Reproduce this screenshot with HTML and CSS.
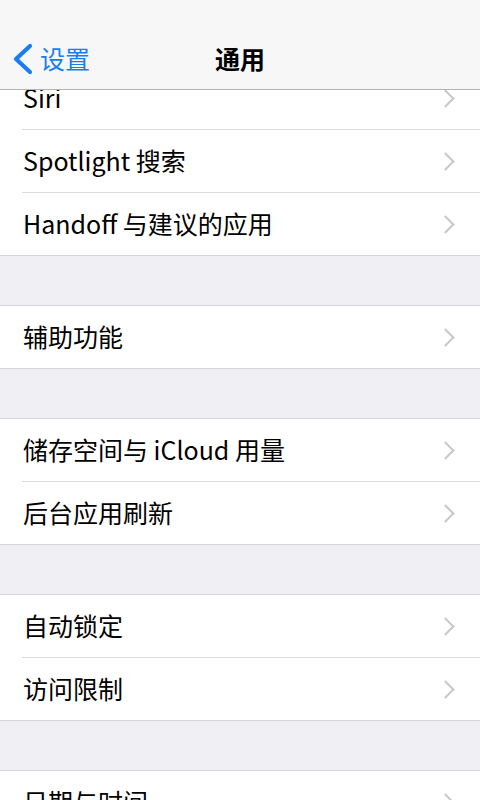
FILE: index.html
```html
<!DOCTYPE html>
<html lang="zh-CN">
<head>
    <meta charset="UTF-8">
    <meta name="viewport" content="width=device-width, initial-scale=1.0">
    <title>通用</title>
    <link rel="stylesheet" href="styles.css">
</head>
<body>

<div class="screen">
    <div class="nav-bar">
        <a class="nav-back" href="#">
            <svg width="22" height="32" viewBox="0 0 22 32">
                <path d="M19 3 L5 16 L19 29" fill="none" stroke="#1a7cf5" stroke-width="4.2" stroke-linecap="round" stroke-linejoin="round"/>
            </svg>
            <span>设置</span>
        </a>
        <div class="nav-title">通用</div>
    </div>

    <div class="settings">
        <div class="group first-group">
            <div class="row"><span class="label">Siri</span><span class="chevron"></span></div>
            <div class="row"><span class="label">Spotlight 搜索</span><span class="chevron"></span></div>
            <div class="row"><span class="label">Handoff 与建议的应用</span><span class="chevron"></span></div>
        </div>

        <div class="group">
            <div class="row"><span class="label">辅助功能</span><span class="chevron"></span></div>
        </div>

        <div class="group">
            <div class="row"><span class="label">储存空间与 iCloud 用量</span><span class="chevron"></span></div>
            <div class="row"><span class="label">后台应用刷新</span><span class="chevron"></span></div>
        </div>

        <div class="group">
            <div class="row"><span class="label">自动锁定</span><span class="chevron"></span></div>
            <div class="row"><span class="label">访问限制</span><span class="chevron"></span></div>
        </div>

        <div class="group">
            <div class="row"><span class="label">日期与时间</span><span class="chevron"></span></div>
            <div class="row"><span class="label">键盘</span><span class="chevron"></span></div>
        </div>
    </div>
</div>

</body>
</html>
```

FILE: styles.css
```css
body {
    margin: 0;
    padding: 0;
    background: #efeff4;
    font-family: "Noto Sans CJK SC", "Noto Sans", sans-serif;
    color: #000000;
}

.screen {
    width: 480px;
    height: 800px;
    overflow: hidden;
    background: #efeff4;
}

.nav-bar {
    position: relative;
    z-index: 2;
    height: 90px;
    box-sizing: border-box;
    background: #f7f7f8;
    border-bottom: 1px solid #b4b4b6;
    display: flex;
    align-items: center;
    justify-content: center;
    padding-top: 27px;
}

.nav-back {
    position: absolute;
    left: 11px;
    top: 43px;
    display: flex;
    align-items: center;
    gap: 7px;
    color: #1a7cf5;
    text-decoration: none;
    font-size: 25px;
    line-height: 32px;
}

.nav-back span {
    margin-top: -2px;
}

.nav-title {
    font-size: 25px;
    font-weight: 700;
    line-height: 32px;
}

.settings {
    display: flex;
    flex-direction: column;
    gap: 49px;
}

.first-group {
    margin-top: -24px;
}

.group {
    background: #ffffff;
    border-top: 1px solid #d6d6da;
    border-bottom: 1px solid #d6d6da;
}

.row {
    height: 62px;
    margin-left: 22px;
    padding-right: 24px;
    display: flex;
    align-items: center;
    justify-content: space-between;
    border-bottom: 1px solid #dcdcdf;
}

.row:last-child {
    border-bottom: none;
}

.label {
    margin-left: 1px;
    font-size: 25px;
    line-height: 30px;
    margin-top: -2px;
}

.chevron {
    width: 11px;
    height: 11px;
    border-top: 2px solid #c7c7cc;
    border-right: 2px solid #c7c7cc;
    transform: rotate(45deg);
    margin-right: 4px;
}
```
